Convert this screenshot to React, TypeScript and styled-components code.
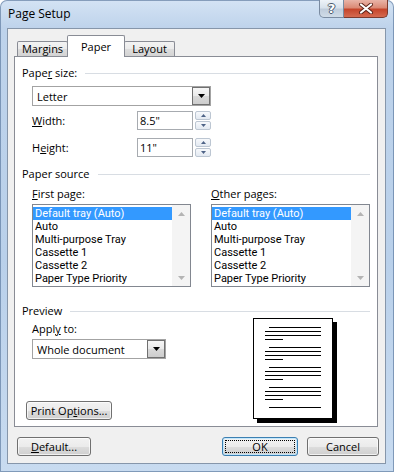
import React from 'react'
import styled, { createGlobalStyle } from 'styled-components'

const Global = createGlobalStyle`
  html, body {
    margin: 0;
    padding: 0;
    background: #fff;
  }
  body {
    font-family: "Open Sans", "Liberation Sans", sans-serif;
    font-size: 11px;
    color: #000;
  }
  * {
    box-sizing: border-box;
  }
`

const trays = ['Default tray (Auto)', 'Auto', 'Multi-purpose Tray', 'Cassette 1', 'Cassette 2', 'Paper Type Priority']

const DownArrow = () => (
  <svg width="7" height="4" viewBox="0 0 7 4">
    <polygon points="0,0 7,0 3.5,4" fill="#000" />
  </svg>
)

const SpinArrow: React.FC<{ up?: boolean }> = ({ up }) => (
  <svg width="5" height="3" viewBox="0 0 5 3">
    <polygon points={up ? '0,3 5,3 2.5,0' : '0,0 5,0 2.5,3'} fill="#4e6387" />
  </svg>
)

const ScrollGlyph: React.FC<{ up?: boolean }> = ({ up }) => (
  <svg width="7" height="4" viewBox="0 0 7 4">
    <polygon points={up ? '0,4 7,4 3.5,0' : '0,0 7,0 3.5,4'} fill="#b4b4b4" />
  </svg>
)

const CloseGlyph = () => (
  <svg width="16" height="11" viewBox="0 0 16 11">
    <path d="M3 1.5 L13 9.5 M13 1.5 L3 9.5" stroke="#5a2218" strokeWidth="4" strokeLinecap="round" />
    <path d="M3 1.5 L13 9.5 M13 1.5 L3 9.5" stroke="#fff" strokeWidth="2.2" strokeLinecap="round" />
  </svg>
)

const PagePreview = () => {
  const groups = [0, 1, 2, 3, 4]
  return (
    <PageSvg width="84" height="105" viewBox="0 0 84 105">
      <rect x="4" y="4" width="80" height="101" fill="#000" />
      <rect x="0.5" y="0.5" width="79" height="100" fill="#fff" stroke="#000" />
      {groups.map(g => {
        const y = 9.5 + g * 20
        return (
          <g key={g} stroke="#000" strokeWidth="1">
            <line x1="16" x2="68" y1={y} y2={y} />
            {g < 4 && (
              <>
                <line x1="12" x2="68" y1={y + 4} y2={y + 4} />
                <line x1="12" x2="68" y1={y + 8} y2={y + 8} />
                <line x1="12" x2="30" y1={y + 12} y2={y + 12} />
              </>
            )}
          </g>
        )
      })}
    </PageSvg>
  )
}

const TrayList: React.FC = () => (
  <ListBox>
    <ListItems>
      {trays.map((t, i) => (
        <ListItem key={t} $selected={i === 0}>
          {t}
        </ListItem>
      ))}
    </ListItems>
    <ScrollBar>
      <ScrollArrow>
        <ScrollGlyph up />
      </ScrollArrow>
      <ScrollArrow>
        <ScrollGlyph />
      </ScrollArrow>
    </ScrollBar>
  </ListBox>
)

export default function App() {
  return (
    <>
      <Global />
      <Window>
        <TitleBar>
          <Title>Page Setup</Title>
          <CaptionButtons>
            <CaptionButton>
              <HelpGlyph>?</HelpGlyph>
            </CaptionButton>
            <CaptionButton $close>
              <CloseGlyph />
            </CaptionButton>
          </CaptionButtons>
        </TitleBar>

        <Client>
          <TabStrip>
            <Tab $w={51}>Margins</Tab>
            <Tab $w={58} $active>
              Paper
            </Tab>
            <Tab $w={51}>Layout</Tab>
          </TabStrip>

          <Panel>
            <GroupHeader $mt={0}>
              <span>
                Pape<u>r</u> size:
              </span>
            </GroupHeader>
            <Combo $w={179} $mt={5}>
              <ComboText>Letter</ComboText>
              <ComboArrow>
                <DownArrow />
              </ComboArrow>
            </Combo>
            <FieldRow $mt={5}>
              <FieldLabel>
                <u>W</u>idth:
              </FieldLabel>
              <TextBox>8.5"</TextBox>
              <Spinner>
                <SpinHalf>
                  <SpinArrow up />
                </SpinHalf>
                <SpinHalf>
                  <SpinArrow />
                </SpinHalf>
              </Spinner>
            </FieldRow>
            <FieldRow $mt={8}>
              <FieldLabel>
                H<u>e</u>ight:
              </FieldLabel>
              <TextBox>11"</TextBox>
              <Spinner>
                <SpinHalf>
                  <SpinArrow up />
                </SpinHalf>
                <SpinHalf>
                  <SpinArrow />
                </SpinHalf>
              </Spinner>
            </FieldRow>

            <GroupHeader $mt={9}>
              <span>Paper source</span>
            </GroupHeader>
            <SourceColumns>
              <Column>
                <Label>
                  <u>F</u>irst page:
                </Label>
                <TrayList />
              </Column>
              <Column>
                <Label>
                  <u>O</u>ther pages:
                </Label>
                <TrayList />
              </Column>
            </SourceColumns>

            <GroupHeader $mt={16}>
              <span>Preview</span>
            </GroupHeader>
            <PreviewRow>
              <PreviewLeft>
                <Label $indent>
                  Appl<u>y</u> to:
                </Label>
                <Combo $w={134} $mt={2}>
                  <ComboText>Whole document</ComboText>
                  <ComboArrow>
                    <DownArrow />
                  </ComboArrow>
                </Combo>
                <PushButton $w={86} $ml={4} $mt={42}>
                  Print Op<u>t</u>ions...
                </PushButton>
              </PreviewLeft>
              <PagePreview />
            </PreviewRow>
          </Panel>

          <ButtonRow>
            <PushButton $w={74}>
              <u>D</u>efault...
            </PushButton>
            <Spacer />
            <PushButton $w={76} $default>
              <FocusRing>OK</FocusRing>
            </PushButton>
            <PushButton $w={72} $ml={9}>
              Cancel
            </PushButton>
          </ButtonRow>
        </Client>
      </Window>
    </>
  )
}

const Window = styled.div`
  width: 394px;
  height: 472px;
  display: flex;
  flex-direction: column;
  padding: 0 8px 8px 7px;
  border-radius: 7px 7px 0 0;
  background: linear-gradient(180deg, #d4e3f4 0%, #bed3eb 28px, #b9d0ea 55%, #c8dbf0 100%);
  box-shadow: inset 0 0 0 1px rgba(70, 100, 140, 0.55);
`

const TitleBar = styled.div`
  height: 28px;
  display: flex;
  align-items: flex-start;
`

const Title = styled.div`
  flex: 1;
  padding-left: 1px;
  line-height: 28px;
  font-size: 12px;
`

const CaptionButtons = styled.div`
  display: flex;
  margin-right: -2px;
`

const CaptionButton = styled.div<{ $close?: boolean }>`
  width: ${p => (p.$close ? 44 : 25)}px;
  height: 18px;
  display: flex;
  align-items: center;
  justify-content: center;
  border: 1px solid ${p => (p.$close ? '#7b3a2e' : '#7a8ba1')};
  border-top: none;
  border-radius: ${p => (p.$close ? '0 0 5px 0' : '0 0 0 5px')};
  background: ${p =>
    p.$close
      ? 'linear-gradient(180deg, #e9b4a8 0%, #db8a76 45%, #c5452b 55%, #d56a50 100%)'
      : 'linear-gradient(180deg, #eef3f8 0%, #d8e2ec 45%, #bfccdb 55%, #d0dce8 100%)'};

  & + & {
    border-left: none;
  }
`

const HelpGlyph = styled.span`
  font-family: "DejaVu Sans", sans-serif;
  font-size: 13px;
  font-weight: bold;
  line-height: 1;
  color: #fff;
  text-shadow: 1px 0 #4a5a6e, -1px 0 #4a5a6e, 0 1px #4a5a6e, 0 -1px #4a5a6e;
`

const Client = styled.div`
  flex: 1;
  display: flex;
  flex-direction: column;
  border: 1px solid #8696aa;
  background: #f0f0f0;
`

const TabStrip = styled.div`
  height: 21px;
  margin: 6px 0 0 9px;
  display: flex;
  align-items: flex-end;
  position: relative;
  z-index: 1;
`

const Tab = styled.div<{ $active?: boolean; $w: number }>`
  width: ${p => p.$w}px;
  height: ${p => (p.$active ? 22 : 15)}px;
  margin-left: -1px;
  margin-bottom: ${p => (p.$active ? -1 : 0)}px;
  padding: ${p => (p.$active ? '4px 0 0' : '0 0 1px')};
  display: flex;
  justify-content: center;
  align-items: ${p => (p.$active ? 'flex-start' : 'center')};
  line-height: 14px;
  border: 1px solid #898c95;
  border-bottom: none;
  border-radius: 2px 2px 0 0;
  background: ${p =>
    p.$active ? '#fff' : 'linear-gradient(180deg, #f3f3f3 0%, #ebebeb 50%, #dedede 51%, #d3d3d3 100%)'};
  position: relative;
  z-index: ${p => (p.$active ? 2 : 0)};

  &:first-child {
    margin-left: 0;
  }
`

const Panel = styled.div`
  height: 371px;
  margin: 0 7px 0 6px;
  padding: 8px 7px 0;
  display: flex;
  flex-direction: column;
  border: 1px solid #898c95;
  background: #fff;
`

const GroupHeader = styled.div<{ $mt: number }>`
  height: 16px;
  margin-top: ${p => p.$mt}px;
  display: flex;
  align-items: center;
  gap: 8px;
  line-height: 16px;

  &::after {
    content: '';
    flex: 1;
    height: 1px;
    background: #d8dde3;
  }
`

const Combo = styled.div<{ $w: number; $mt: number }>`
  width: ${p => p.$w}px;
  height: 20px;
  margin: ${p => p.$mt}px 0 0 10px;
  padding-left: 4px;
  display: flex;
  align-items: center;
  border: 1px solid #a3a3a3;
  background: #fff;
`

const ComboText = styled.span`
  flex: 1;
`

const ComboArrow = styled.div`
  width: 18px;
  height: 18px;
  display: flex;
  align-items: center;
  justify-content: center;
  border: 1px solid #707070;
  background: linear-gradient(180deg, #f6f6f6 0%, #e9e9e9 50%, #d9d9d9 51%, #cdcdcd 100%);
`

const FieldRow = styled.div<{ $mt: number }>`
  height: 19px;
  margin-top: ${p => p.$mt}px;
  padding-left: 10px;
  display: flex;
  align-items: center;
`

const FieldLabel = styled.span`
  width: 105px;
`

const TextBox = styled.div`
  width: 56px;
  height: 19px;
  padding-left: 2px;
  line-height: 17px;
  border: 1px solid #a7abb0;
  background: #fff;
`

const Spinner = styled.div`
  width: 16px;
  height: 19px;
  margin-left: 2px;
  display: flex;
  flex-direction: column;
  gap: 1px;
`

const SpinHalf = styled.div`
  flex: 1;
  display: flex;
  align-items: center;
  justify-content: center;
  border: 1px solid #bcc6d2;
  border-radius: 2px;
  background: linear-gradient(180deg, #f7f9fc 0%, #e3e9f1 100%);
`

const SourceColumns = styled.div`
  padding-left: 10px;
  display: flex;
  gap: 20px;
`

const Column = styled.div`
  width: 159px;
  display: flex;
  flex-direction: column;
`

const Label = styled.div<{ $indent?: boolean }>`
  height: 16px;
  margin-top: ${p => (p.$indent ? 2 : 4)}px;
  padding-left: ${p => (p.$indent ? 10 : 0)}px;
  line-height: 16px;
`

const ListBox = styled.div`
  height: 83px;
  margin-top: 2px;
  display: flex;
  border: 1px solid #828790;
  background: #fff;
`

const ListItems = styled.div`
  flex: 1;
  padding-top: 2px;
  font-family: Roboto, "Open Sans", sans-serif;
  font-size: 11px;
`

const ListItem = styled.div<{ $selected?: boolean }>`
  height: 13px;
  padding-left: 2px;
  line-height: 13px;
  white-space: nowrap;
  color: ${p => (p.$selected ? '#fff' : '#000')};
  background: ${p => (p.$selected ? '#3399ff' : 'transparent')};
`

const ScrollBar = styled.div`
  width: 18px;
  display: flex;
  flex-direction: column;
  justify-content: space-between;
  background: #f4f4f4;
`

const ScrollArrow = styled.div`
  height: 17px;
  display: flex;
  align-items: center;
  justify-content: center;
`

const PreviewRow = styled.div`
  display: flex;
`

const PreviewLeft = styled.div`
  flex: 1;
  display: flex;
  flex-direction: column;
`

const PageSvg = styled.svg`
  display: block;
  margin: -1px 33px 0 0;
`

const PushButton = styled.div<{ $w: number; $ml?: number; $mt?: number; $default?: boolean }>`
  width: ${p => p.$w}px;
  height: 19px;
  margin: ${p => p.$mt ?? 0}px 0 0 ${p => p.$ml ?? 0}px;
  padding: ${p => (p.$default ? '2px' : '0')};
  display: flex;
  align-items: center;
  justify-content: center;
  border: 1px solid ${p => (p.$default ? '#3c7fb1' : '#707070')};
  border-radius: 3px;
  background: linear-gradient(180deg, #f2f2f2 0%, #ebebeb 50%, #dddddd 51%, #cfcfcf 100%);
  box-shadow: inset 0 0 0 1px ${p => (p.$default ? 'rgba(190, 230, 253, 0.9)' : 'rgba(255, 255, 255, 0.7)')};
`

const FocusRing = styled.div`
  flex: 1;
  align-self: stretch;
  display: flex;
  align-items: center;
  justify-content: center;
  border: 1px dotted #000;
`

const ButtonRow = styled.div`
  margin-top: 10px;
  padding: 0 6px 0 9px;
  display: flex;
`

const Spacer = styled.div`
  flex: 1;
`
